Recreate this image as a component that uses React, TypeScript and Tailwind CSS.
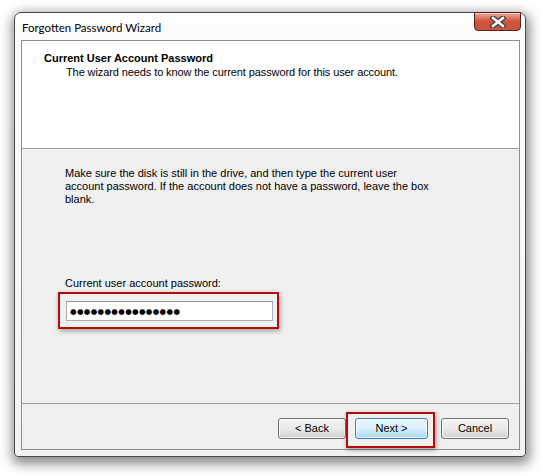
import React from "react";

const ui = { fontFamily: '"Liberation Sans", Arial, sans-serif' };

const CloseButton = () => (
  <div className="mr-[4px] -mt-px flex h-[19px] w-[47px] items-center justify-center rounded-b-[4px] border border-[#5a2117] bg-gradient-to-b from-[#e9a99b] via-[#d0533d] to-[#c9553c] shadow-[inset_0_1px_0_rgba(255,255,255,0.5)]">
    <svg width="18" height="12" viewBox="0 0 18 12">
      <path
        d="M4 2 L14 10 M14 2 L4 10"
        stroke="#3b3b3b"
        strokeWidth="5"
        strokeLinecap="square"
      />
      <path
        d="M4 2 L14 10 M14 2 L4 10"
        stroke="#ffffff"
        strokeWidth="2.6"
        strokeLinecap="square"
      />
    </svg>
  </div>
);

const WinButton = ({ label, primary }: { label: string; primary?: boolean }) => (
  <button
    className={
      primary
        ? "h-[21px] w-[73px] rounded-[3px] border border-[#3c7fb1] bg-gradient-to-b from-[#eaf6fd] via-[#d9f0fc] to-[#a7d9f5] text-[11px] text-black shadow-[inset_0_0_0_1px_rgba(255,255,255,0.7)]"
        : "h-[21px] w-[68px] rounded-[3px] border border-[#707070] bg-gradient-to-b from-[#f2f2f2] via-[#ebebeb] to-[#cfcfcf] text-[11px] text-black shadow-[inset_0_0_0_1px_rgba(255,255,255,0.7)]"
    }
    style={ui}
  >
    {label}
  </button>
);

export default function App() {
  return (
    <div className="h-[476px] w-[543px] overflow-hidden bg-white pt-[12px] pl-[14px]" style={ui}>
      <div className="flex h-[445px] w-[512px] flex-col rounded-t-[7px] rounded-b-[4px] border border-[#4a4a4a] bg-gradient-to-b from-[#fdfdfd] to-[#f3f3f3] shadow-[1px_4px_12px_3px_rgba(0,0,0,0.45)]">
        {/* title bar */}
        <div className="flex h-[27px] items-start justify-between">
          <span className="mt-[6px] pl-[7px] text-[11.5px] text-black" style={{ fontFamily: 'Lato, "Liberation Sans", sans-serif' }}>
            Forgotten Password Wizard
          </span>
          <CloseButton />
        </div>

        {/* client area */}
        <div className="mb-[6px] ml-[6px] mr-[5px] flex flex-1 flex-col border border-[#8f8f8f] bg-[#f0f0f0] text-[11px] leading-[13px] text-black">
          <div className="h-[108px] border-b border-[#a0a0a0] bg-white pl-[22px] pt-[11px]">
            <div className="font-bold">Current User Account Password</div>
            <div className="mt-[1px] pl-[22px] tracking-[-0.1px]">
              The wizard needs to know the current password for this user account.
            </div>
          </div>

          <div className="flex flex-1 flex-col pl-[43px] pt-[18px]">
            <p className="whitespace-nowrap">
              Make sure the disk is still in the drive, and then type the current user
              <br />
              account password. If the account does not have a password, leave the box
              <br />
              blank.
            </p>
            <div className="mt-[71px]">Current user account password:</div>
            <div className="relative mt-[11px] ml-px w-[207px]">
              <div className="absolute -top-[9px] -left-[8px] -right-[6px] -bottom-[8px] border-2 border-[#b50a0a] shadow-[1px_2px_5px_rgba(0,0,0,0.35)]" />
              <div className="relative flex h-[20px] items-center border border-[#abadb3] border-t-[#8f959e] bg-white pl-[3px]">
                <span className="text-[7.5px] tracking-[0.35px] text-black" style={{ fontFamily: '"DejaVu Sans", sans-serif' }}>
                  ●●●●●●●●●●●●●●●●
                </span>
              </div>
            </div>
          </div>

          <div className="flex h-[46px] items-start justify-end border-t border-[#a0a0a0] pr-[10px] pt-[14px]">
            <WinButton label="< Back" />
            <div className="relative ml-[9px]">
              <div className="absolute -top-[6px] -left-[9px] -right-[7px] -bottom-[9px] border-2 border-[#b50a0a] shadow-[1px_2px_5px_rgba(0,0,0,0.35)]" />
              <div className="relative flex">
                <WinButton label="Next >" primary />
              </div>
            </div>
            <div className="ml-[13px]">
              <WinButton label="Cancel" />
            </div>
          </div>
        </div>
      </div>
    </div>
  );
}
